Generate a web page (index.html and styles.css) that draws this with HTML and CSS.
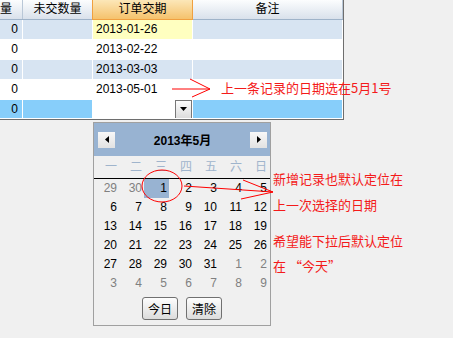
FILE: index.html
```html
<!DOCTYPE html>
<html lang="zh-CN">
<head>
    <meta charset="UTF-8">
    <title>订单交期</title>
    <link rel="stylesheet" href="styles.css">
</head>
<body>

<div class="page">

    <!-- 表格 -->
    <div class="grid">
        <div class="row head">
            <div class="cell cut">量</div>
            <div class="cell">未交数量</div>
            <div class="cell active">订单交期</div>
            <div class="cell">备注</div>
        </div>
        <div class="row alt">
            <div class="cell num">0</div>
            <div class="cell"></div>
            <div class="cell date current">2013-01-26</div>
            <div class="cell"></div>
        </div>
        <div class="row">
            <div class="cell num">0</div>
            <div class="cell"></div>
            <div class="cell date">2013-02-22</div>
            <div class="cell"></div>
        </div>
        <div class="row alt">
            <div class="cell num">0</div>
            <div class="cell"></div>
            <div class="cell date">2013-03-03</div>
            <div class="cell"></div>
        </div>
        <div class="row">
            <div class="cell num">0</div>
            <div class="cell"></div>
            <div class="cell date">2013-05-01</div>
            <div class="cell"></div>
        </div>
        <div class="row new">
            <div class="cell num">0</div>
            <div class="cell"></div>
            <div class="cell editor">
                <span class="drop">
                    <svg width="7" height="4" viewBox="0 0 7 4"><polygon points="0,0 7,0 3.5,4" fill="#000"/></svg>
                </span>
            </div>
            <div class="cell"></div>
        </div>
    </div>

    <!-- 日期下拉 -->
    <div class="calendar">
        <div class="cal-head">
            <span class="nav">
                <svg width="4" height="7" viewBox="0 0 4 7"><polygon points="4,0 4,7 0,3.5" fill="#000"/></svg>
            </span>
            <span class="cal-title">2013年5月</span>
            <span class="nav">
                <svg width="4" height="7" viewBox="0 0 4 7"><polygon points="0,0 0,7 4,3.5" fill="#000"/></svg>
            </span>
        </div>
        <div class="weekdays">
            <span>一</span><span>二</span><span>三</span><span>四</span><span>五</span><span>六</span><span>日</span>
        </div>
        <div class="days">
            <span class="other">29</span><span class="other">30</span><span class="sel">1</span><span>2</span><span>3</span><span>4</span><span>5</span>
            <span>6</span><span>7</span><span>8</span><span>9</span><span>10</span><span>11</span><span>12</span>
            <span>13</span><span>14</span><span>15</span><span>16</span><span>17</span><span>18</span><span>19</span>
            <span>20</span><span>21</span><span>22</span><span>23</span><span>24</span><span>25</span><span>26</span>
            <span>27</span><span>28</span><span>29</span><span>30</span><span>31</span><span class="other">1</span><span class="other">2</span>
            <span class="other">3</span><span class="other">4</span><span class="other">5</span><span class="other">6</span><span class="other">7</span><span class="other">8</span><span class="other">9</span>
        </div>
        <div class="cal-foot">
            <button class="btn">今日</button>
            <button class="btn">清除</button>
        </div>
    </div>

    <!-- 标注 -->
    <p class="note note-row">上一条记录的日期选在5月1号</p>
    <p class="note note-new">新增记录也默认定位在<br>上一次选择的日期</p>
    <p class="note note-wish">希望能下拉后默认定位<br>在 “今天”</p>

    <svg class="marks" width="453" height="338" viewBox="0 0 453 338">
        <g fill="none" stroke="#f00" stroke-width="1">
            <line x1="172" y1="89" x2="210" y2="89"/>
            <line x1="190" y1="79" x2="210" y2="89"/>
            <line x1="192" y1="97" x2="210" y2="89"/>
            <ellipse cx="162" cy="186" rx="20" ry="16"/>
            <line x1="184" y1="186" x2="273" y2="192"/>
            <line x1="243" y1="180" x2="273" y2="192"/>
            <line x1="241" y1="199" x2="273" y2="192"/>
        </g>
    </svg>

</div>

</body>
</html>
```

FILE: styles.css
```css
body {
    margin: 0;
    background-color: #f0f0f0;
    font-family: "Liberation Sans", "Noto Sans CJK SC", sans-serif;
    font-size: 12px;
    color: #000;
}

.page {
    position: relative;
    width: 453px;
    height: 338px;
    overflow: hidden;
}

/* 表格 */
.grid {
    width: 343px;
    border-right: 1px solid #6e6e6e;
    border-bottom: 1px solid #6e6e6e;
    background-color: #fff;
}

.row {
    display: grid;
    grid-template-columns: 22px 69px 99px 149px;
    column-gap: 1px;
    height: 19px;
    padding-right: 1px;
    border-bottom: 1px solid #fff;
    background-color: #fff;
}

.row:last-child {
    height: 18px;
}

.cell {
    display: flex;
    align-items: center;
    line-height: 19px;
    white-space: nowrap;
    overflow: hidden;
}

.head {
    background-color: #b9c7d7;
    border-bottom-color: #9fb3c9;
}

.head .cell {
    justify-content: center;
    background: linear-gradient(#fcfdfe, #d9e1eb);
}

.head .cut {
    justify-content: flex-start;
}

.head .active {
    position: relative;
    background: linear-gradient(#fce7b8, #f5c26c);
    box-shadow: 0 0 0 1px #f0a040;
}

.alt .cell {
    background-color: #d7e4f2;
}

.num {
    justify-content: flex-end;
    padding-right: 4px;
}

.date {
    padding-left: 3px;
}

.alt .current {
    background-color: #ffffc0;
}

.new .cell {
    background-color: #87cefa;
}

.new .editor {
    justify-content: flex-end;
    background-color: #fff;
}

.drop {
    display: flex;
    align-items: center;
    justify-content: center;
    box-sizing: border-box;
    width: 17px;
    height: 19px;
    border: 1px solid #777;
    background: linear-gradient(#fdfdfd, #dcdcdc);
}

/* 日期下拉 */
.calendar {
    position: absolute;
    left: 93px;
    top: 122px;
    width: 178px;
    height: 204px;
    box-sizing: border-box;
    border: 1px solid #a0a0a0;
    background-color: #f0f0f0;
}

.cal-head {
    display: flex;
    align-items: center;
    justify-content: space-between;
    height: 33px;
    padding: 0 3px 0 4px;
    background-color: #98b3d2;
}

.nav {
    display: flex;
    align-items: center;
    justify-content: center;
    width: 17px;
    height: 16px;
    background: linear-gradient(#f8f8f8, #e2e2e2);
}

.cal-title {
    font-weight: bold;
    font-size: 12px;
}

.weekdays, .days {
    display: grid;
    grid-template-columns: repeat(7, 25px);
}

.weekdays {
    height: 22px;
    line-height: 22px;
    border-bottom: 1px solid #000;
    color: #9fb4cc;
}

.weekdays span, .days span {
    text-align: right;
    padding-right: 2px;
}

.days {
    grid-auto-rows: 19px;
    line-height: 19px;
}

.days .other {
    color: #808080;
}

.days .sel {
    background-color: #98b3d2;
}

.cal-foot {
    display: flex;
    justify-content: center;
    gap: 8px;
    margin-top: 4px;
}

.btn {
    width: 36px;
    height: 23px;
    padding: 0;
    border: 1px solid #707070;
    border-radius: 3px;
    background: linear-gradient(#fdfdfd, #dcdcdc);
    font-family: "Noto Sans CJK SC", sans-serif;
    font-size: 12px;
    color: #000;
}

/* 标注 */
.note {
    position: absolute;
    margin: 0;
    color: #f41a1a;
    font-family: "Noto Sans CJK SC", sans-serif;
    font-size: 13px;
    white-space: nowrap;
}

.note-row {
    left: 221px;
    top: 79px;
    line-height: 18px;
}

.note-new {
    left: 273px;
    top: 166px;
    line-height: 26px;
}

.note-wish {
    left: 273px;
    top: 228px;
    line-height: 25px;
}

.marks {
    position: absolute;
    left: 0;
    top: 0;
    pointer-events: none;
}
```
